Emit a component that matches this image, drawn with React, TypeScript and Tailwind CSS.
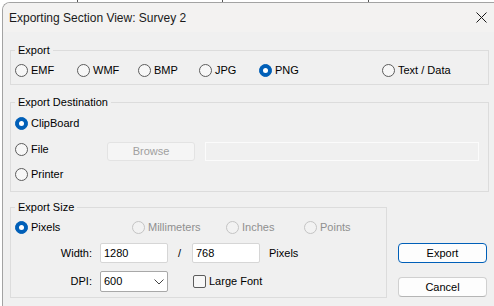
import React from "react";
import clsx from "clsx";

const Radio: React.FC<{ label: string; checked?: boolean; disabled?: boolean; className?: string }> = ({
  label,
  checked,
  disabled,
  className,
}) => (
  <div className={clsx("flex items-center h-[13px]", className)}>
    <span
      className={clsx(
        "w-[13px] h-[13px] shrink-0 rounded-full border flex items-center justify-center",
        checked
          ? "bg-[#005fb8] border-[#005fb8]"
          : disabled
          ? "bg-[#f2f2f2] border-[#c4c4c4]"
          : "bg-[#f7f7f7] border-[#5c5c5c]"
      )}
    >
      {checked && <span className="w-[5px] h-[5px] rounded-full bg-white" />}
    </span>
    <span className={clsx("ml-[3px] whitespace-pre", disabled ? "text-[#8f8f8f]" : "text-black")}>{label}</span>
  </div>
);

// group box with the caption sitting on the top border
const Group: React.FC<{ title: string; className?: string; children: React.ReactNode }> = ({
  title,
  className,
  children,
}) => (
  <div className={clsx("relative border border-[#dcdcdc]", className)}>
    <span className="absolute -top-[7px] left-[4px] px-[3px] bg-[#f0f0f0] leading-[13px]">{title}</span>
    {children}
  </div>
);

const Input: React.FC<{ value: string }> = ({ value }) => (
  <div className="w-[68px] h-[20px] bg-white border border-[#d6d6d6] rounded-[2px] pl-[3px] flex items-center">
    {value}
  </div>
);

export default function App() {
  return (
    <div
      className="relative w-[494px] h-[306px] bg-white overflow-hidden pt-[2px] pl-[2px] text-[11px] leading-[13px] text-black"
      style={{ fontFamily: '"Liberation Sans", Arial, sans-serif' }}
    >
      {/* bits of the window behind */}
      <span className="absolute top-0 left-[77px] w-px h-[2px] bg-[#555]" />
      <span className="absolute top-0 left-[222px] w-px h-[2px] bg-[#555]" />
      <span className="absolute top-0 left-[368px] w-px h-[2px] bg-[#555]" />

      <div className="w-[520px] h-[320px] border-l border-t border-[#a3a3a3] rounded-tl-[8px] overflow-hidden flex flex-col">
        {/* title bar */}
        <div className="h-[29px] shrink-0 bg-[#f3f2f1] flex items-center pl-[6px]">
          <span className="w-[467px] text-[12px] leading-[16px] mt-[1px] text-[#1a1a1a]">
            Exporting Section View: Survey 2
          </span>
          <svg width="11" height="11" viewBox="0 0 11 11">
            <path d="M0.5 0.5 L10.5 10.5 M10.5 0.5 L0.5 10.5" stroke="#1a1a1a" strokeWidth="1" fill="none" />
          </svg>
        </div>

        {/* body */}
        <div className="flex-1 bg-[#f0f0f0] pl-[7px] pt-[18px]">
          <Group title="Export" className="w-[479px] h-[35px]">
            <div className="flex pt-[13px] pl-[4px]">
              <Radio label="EMF" className="w-[62px]" />
              <Radio label="WMF" className="w-[61px]" />
              <Radio label="BMP" className="w-[61px]" />
              <Radio label="JPG" className="w-[60px]" />
              <Radio label="PNG" checked className="w-[123px]" />
              <Radio label="Text / Data" />
            </div>
          </Group>

          <Group title="Export Destination" className="mt-[17px] w-[479px] h-[90px]">
            <div className="flex flex-col pt-[10px] pl-[4px]">
              <div className="h-[20px] flex items-center">
                <Radio label="ClipBoard" checked />
              </div>
              <div className="h-[20px] mt-[6px] flex items-start">
                <Radio label="File" className="w-[92px] mt-[4px]" />
                <div className="mt-[3px] w-[88px] h-[19px] bg-[#f5f5f5] border border-[#e3e3e3] rounded-[3px] flex items-center justify-center text-[#a0a0a0]">
                  Browse
                </div>
                <div className="mt-[3px] ml-[10px] w-[274px] h-[19px] border border-[#fbfbfb] bg-[#f0f0f0]" />
              </div>
              <div className="h-[20px] mt-[5px] flex items-center">
                <Radio label="Printer" />
              </div>
            </div>
          </Group>

          <div className="flex mt-[15px]">
            <Group title="Export Size" className="w-[377px] h-[91px]">
              <div className="flex pt-[13px] pl-[4px]">
                <Radio label="Pixels" checked className="w-[117px]" />
                <Radio label="Millimeters" disabled className="w-[94px]" />
                <Radio label="Inches" disabled className="w-[78px]" />
                <Radio label="Points" disabled />
              </div>
              <div className="flex items-center mt-[9px]">
                <span className="w-[81px] text-right">Width:</span>
                <div className="ml-[8px]">
                  <Input value="1280" />
                </div>
                <span className="w-[24px] pl-[10px]">/</span>
                <Input value="768" />
                <span className="ml-[9px]">Pixels</span>
              </div>
              <div className="flex items-center mt-[8px]">
                <span className="w-[81px] text-right">DPI:</span>
                <div className="ml-[8px] w-[68px] h-[21px] bg-white border border-[#a8a8a8] rounded-[2px] pl-[3px] pr-[3px] flex items-center justify-between">
                  <span>600</span>
                  <svg width="10" height="6" viewBox="0 0 10 6">
                    <path d="M0.5 0.5 L5 5 L9.5 0.5" stroke="#444" strokeWidth="1" fill="none" />
                  </svg>
                </div>
                <span className="ml-[25px] w-[13px] h-[13px] border border-[#5c5c5c] rounded-[2px] bg-[#f7f7f7]" />
                <span className="ml-[3px]">Large Font</span>
              </div>
            </Group>

            <div className="ml-[11px] pt-[36px] flex flex-col">
              <button className="w-[89px] h-[20px] bg-[#fdfdfd] border border-[#005fb8] rounded-[4px] flex items-center justify-center">
                Export
              </button>
              <button className="mt-[14px] w-[89px] h-[20px] bg-[#fdfdfd] border border-[#d0d0d0] border-b-[#b5b5b5] rounded-[4px] flex items-center justify-center">
                Cancel
              </button>
            </div>
          </div>
        </div>
      </div>
    </div>
  );
}
